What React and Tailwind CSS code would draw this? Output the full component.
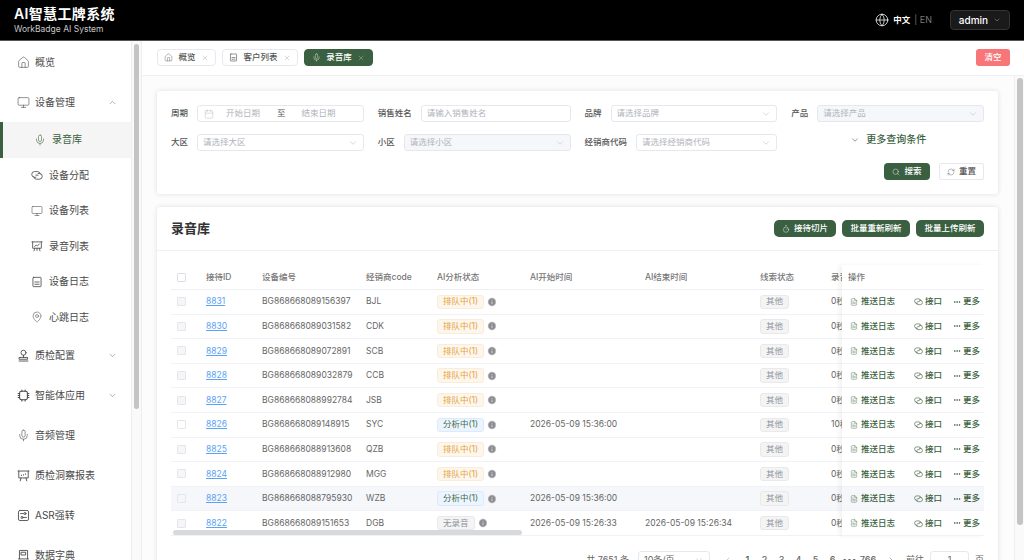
import React from 'react';
import { House, Monitor, Mic, ChevronDown, ChevronUp, ChevronLeft, ChevronRight, X, Calendar, Search, RefreshCw, Timer, Globe, Ellipsis, Info, MapPin, FileText } from 'lucide-react';

const Svg = ({ className, sw = 1.1, children }) => (
  <svg viewBox="0 0 16 16" fill="none" stroke="currentColor" strokeWidth={sw} strokeLinecap="round" strokeLinejoin="round" className={className}>{children}</svg>
);
const Conn = ({ className }) => (
  <Svg className={className}>
    <path d="M6.5 11H4.8a3.8 3.8 0 0 1 0-7.6h3.9a3.8 3.8 0 0 1 3.7 3" />
    <path d="M9.5 6h1.7a3.8 3.8 0 0 1 0 7.6H7.3a3.8 3.8 0 0 1-3.7-3" />
    <path d="M6.5 8.2h3" />
  </Svg>
);
const Board = ({ className }) => (
  <Svg className={className}>
    <path d="M1.2 2.5h13.6" /><path d="M2.2 2.5v8.5h11.6V2.5" />
    <path d="M5 11l-1 3.5M11 11l1 3.5M8 11v3" /><path d="M4.8 8.6l2-1.8 1.8 1 2.6-2.6" />
  </Svg>
);
const BoardDots = ({ className }) => (
  <Svg className={className}>
    <path d="M1.2 2.5h13.6" /><path d="M2.2 2.5v8.5h11.6V2.5" />
    <path d="M5 11l-1 3.5M11 11l1 3.5" /><path d="M5.5 7.5v.6M8 7v.6M10.5 6v.6" />
  </Svg>
);
const Ticket = ({ className }) => (
  <Svg className={className}>
    <rect x="2.6" y="1.8" width="10.8" height="12.4" rx="0.8" /><path d="M5.2 8h5.6M5.2 11h5.6" />
  </Svg>
);
const StampI = ({ className }) => (
  <Svg className={className}>
    <circle cx="8" cy="4.6" r="3.1" /><path d="M8 7.7v2.6" /><path d="M3 10.4h10v2.2H3z" /><path d="M2.6 14.8h10.8" />
  </Svg>
);
const Chip = ({ className }) => (
  <Svg className={className} sw={1.3}>
    <rect x="3.2" y="2.8" width="9.6" height="10.4" rx="2" />
    <path d="M1.4 5.5h1.8M1.4 8h1.8M1.4 10.5h1.8M12.8 5.5h1.8M12.8 8h1.8M12.8 10.5h1.8M6 1.2v1.6M10 1.2v1.6M6 13.2v1.6M10 13.2v1.6" />
  </Svg>
);
const Ops = ({ className }) => (
  <Svg className={className}>
    <rect x="1.8" y="1.8" width="12.4" height="12.4" rx="1.8" />
    <path d="M4.4 5.6h3.4M11.6 10.4H8.2" /><circle cx="9.8" cy="5.6" r="1.3" /><circle cx="6.2" cy="10.4" r="1.3" />
  </Svg>
);
const Book = ({ className }) => (
  <Svg className={className}>
    <path d="M3 12.2V1.8h10v10.4" /><path d="M1.8 12.2h12.4v0M2 14.6h12" /><rect x="5.4" y="4" width="5.2" height="3.4" />
  </Svg>
);

const sub = [
  ['录音库', Mic, true],
  ['设备分配', Conn],
  ['设备列表', Monitor],
  ['录音列表', Board],
  ['设备日志', Ticket],
  ['心跳日志', MapPin],
];
const top2 = [
  ['质检配置', StampI, true],
  ['智能体应用', Chip, true],
  ['音频管理', Mic],
  ['质检洞察报表', BoardDots],
  ['ASR强转', Ops],
  ['数据字典', Book],
];

const rows = [
  ['8831', 'BG868668089156397', 'BJL', 'q', '', '', '0秒'],
  ['8830', 'BG868668089031582', 'CDK', 'q', '', '', '0秒'],
  ['8829', 'BG868668089072891', 'SCB', 'q', '', '', '0秒'],
  ['8828', 'BG868668089032879', 'CCB', 'q', '', '', '0秒'],
  ['8827', 'BG868668088992784', 'JSB', 'q', '', '', '0秒'],
  ['8826', 'BG868668089148915', 'SYC', 'a', '2026-05-09 15:36:00', '', '10秒'],
  ['8825', 'BG868668088913608', 'QZB', 'q', '', '', '0秒'],
  ['8824', 'BG868668088912980', 'MGG', 'q', '', '', '0秒'],
  ['8823', 'BG868668088795930', 'WZB', 'a', '2026-05-09 15:36:00', '', '0秒'],
  ['8822', 'BG868668089151653', 'DGB', 'n', '2026-05-09 15:26:33', '2026-05-09 15:26:34', '0秒'],
];

const tagCls = {
  q: 'bg-[#fdf6ec] border-[#faecd8] text-[#e6a23c]',
  a: 'bg-[#ecf5ff] border-[#d9ecff] text-[#3f6b4a]',
  n: 'bg-[#f4f4f5] border-[#e9e9eb] text-[#909399]',
};
const tagText = { q: '排队中(1)', a: '分析中(1)', n: '无录音' };

const Field = ({ label, children }) => (
  <div className="flex items-center h-[17px]">
    <span className="shrink-0 mr-[9px] text-[#555] font-medium">{label}</span>
    {children}
  </div>
);

const SelectBox = ({ ph, disabled }) => (
  <div className={`flex-1 h-[17px] flex items-center justify-between px-[5px] border border-[#e6e8ee] rounded-[3px] ${disabled ? 'bg-[#f5f7fa]' : 'bg-white'}`}>
    <span className="text-[#b0b3ba]">{ph}</span>
    <ChevronDown className="w-[10px] h-[10px] text-[#b0b3ba]" strokeWidth={1.2} />
  </div>
);

const GreenBtn = ({ children, w }) => (
  <div className={`h-[17px] ${w} flex items-center justify-center gap-[4px] bg-[#3a5f41] text-white text-[8.5px] font-medium rounded-[4px]`}>{children}</div>
);

const Tab = ({ Icon, label, active, w }) => (
  <div className={`h-[17px] ${w} flex items-center justify-center gap-[5px] rounded-[4px] border text-[8.5px] font-medium ${active ? 'bg-[#3a5f41] border-[#3a5f41] text-white' : 'bg-white border-[#e6e8ee] text-[#555]'}`}>
    <Icon className="w-[9px] h-[9px]" strokeWidth={1.1} />
    <span>{label}</span>
    <X className={`w-[8px] h-[8px] ${active ? 'text-[#d0d8d2]' : 'text-[#999]'}`} strokeWidth={1.1} />
  </div>
);

export default function App() {
  return (
    <div className="w-[1024px] h-[560px] overflow-hidden flex flex-col bg-white text-[8.5px] text-[#666] font-['Inter','Noto_Sans_CJK_SC',sans-serif]">
      <header className="h-[41px] shrink-0 bg-black border-b border-[#555] flex items-center pl-[14px] pr-[14px]">
        <div className="flex flex-col">
          <span className="text-white text-[14px] leading-[17px] font-semibold tracking-[0.35px]">AI智慧工牌系统</span>
          <span className="text-[#c8c8c8] text-[8.5px] leading-[11px] mt-[2px]">WorkBadge AI System</span>
        </div>
        <div className="ml-auto flex items-center">
          <Globe className="w-[14px] h-[14px] text-white" strokeWidth={1.3} />
          <span className="ml-[4px] text-white text-[8.5px] font-semibold">中文</span>
          <span className="ml-[4px] text-[#777] text-[9px]">| EN</span>
          <div className="ml-[18px] w-[60px] h-[20px] rounded-[4px] border border-[#333] bg-[#1a1a1a] flex items-center justify-center gap-[5px] text-white text-[10px] font-medium">
            admin <ChevronDown className="w-[8px] h-[8px] text-[#bbb]" strokeWidth={1.3} />
          </div>
        </div>
      </header>

      <div className="flex-1 min-h-0 flex">
        <aside className="w-[142px] shrink-0 flex border-r border-[#eeeeee] overflow-hidden">
          <nav className="w-[131px] shrink-0 text-[10px] text-[#4a4a4a]">
            <div className="h-[42px] flex items-center pl-[17px] gap-[5px]">
              <House className="w-[13px] h-[13px]" strokeWidth={1.1} /><span>概览</span>
            </div>
            <div className="h-[39px] flex items-center pl-[17px] gap-[5px]">
              <Monitor className="w-[13px] h-[13px]" strokeWidth={1.1} /><span>设备管理</span>
              <ChevronUp className="w-[9px] h-[9px] ml-auto mr-[14px]" strokeWidth={1.1} />
            </div>
            {sub.map(([t, I, act]) => (
              <div key={t} className={`h-[35.5px] flex items-center gap-[6px] ${act ? 'pl-[31px] bg-[#f5f5f5] border-l-[3px] border-[#3a5f41] text-[#3a5f41]' : 'pl-[31px]'}`}>
                <I className="w-[12px] h-[12px]" strokeWidth={1.1} /><span>{t}</span>
              </div>
            ))}
            {top2.map(([t, I, chev]) => (
              <div key={t} className="h-[40px] flex items-center pl-[17px] gap-[5px]">
                <I className="w-[13px] h-[13px]" strokeWidth={1.1} /><span>{t}</span>
                {chev && <ChevronDown className="w-[9px] h-[9px] ml-auto mr-[14px]" strokeWidth={1.1} />}
              </div>
            ))}
          </nav>
          <div className="flex-1 border-l border-[#eeeeee] bg-[#fafafa] flex justify-center">
            <div className="w-[5px] h-[365px] mt-[3px] rounded-full bg-[#c4c4c4]" />
          </div>
        </aside>

        <main className="flex-1 min-w-0 flex flex-col">
          <div className="h-[35px] shrink-0 border-b border-[#f0f0f0] flex items-center gap-[6px] pl-[15px] pr-[14px] pb-[1px]">
            <Tab Icon={House} label="概览" w="w-[59px]" />
            <Tab Icon={Ticket} label="客户列表" w="w-[76px]" />
            <Tab Icon={Mic} label="录音库" w="w-[69px]" active />
            <div className="ml-auto w-[34px] h-[17px] rounded-[3px] bg-[#f87578] text-white text-[8.5px] font-medium flex items-center justify-center">清空</div>
          </div>

          <div className="flex-1 min-h-0 flex">
            <div className="flex-1 min-w-0 overflow-hidden pl-[15px] pr-[16px] pt-[15px] flex flex-col gap-[13px] bg-[#fcfcfc]">
              <section className="shrink-0 h-[103px] bg-white rounded-[3px] shadow-[0_0_5px_rgba(0,0,0,0.12)] p-[14px]">
                <div className="grid grid-cols-4 gap-x-[14px] gap-y-[12px]">
                  <Field label="周期">
                    <div className="flex-1 h-[17px] flex items-center border border-[#e6e8ee] rounded-[3px] pl-[6px] text-[#b0b3ba]">
                      <Calendar className="w-[10px] h-[10px]" strokeWidth={1} />
                      <span className="ml-[12px]">开始日期</span>
                      <span className="ml-[17px] text-[#555]">至</span>
                      <span className="ml-[16px]">结束日期</span>
                    </div>
                  </Field>
                  <Field label="销售姓名">
                    <div className="flex-1 h-[17px] flex items-center border border-[#e6e8ee] rounded-[3px] px-[5px] text-[#b0b3ba]">请输入销售姓名</div>
                  </Field>
                  <Field label="品牌"><SelectBox ph="请选择品牌" /></Field>
                  <Field label="产品"><SelectBox ph="请选择产品" disabled /></Field>
                  <Field label="大区"><SelectBox ph="请选择大区" /></Field>
                  <Field label="小区"><SelectBox ph="请选择小区" disabled /></Field>
                  <Field label="经销商代码"><SelectBox ph="请选择经销商代码" /></Field>
                  <div className="h-[17px] flex items-center justify-start pl-[59px] gap-[6px] text-[#3a5f41] text-[10px] font-medium -mt-[3px]">
                    <ChevronDown className="w-[10px] h-[10px]" strokeWidth={1.4} />更多查询条件
                  </div>
                </div>
                <div className="flex justify-end gap-[9px] mt-[12px]">
                  <GreenBtn w="w-[46px]"><Search className="w-[8px] h-[8px]" strokeWidth={1.3} />搜索</GreenBtn>
                  <div className="h-[17px] w-[45px] flex items-center justify-center gap-[4px] bg-white border border-[#e6e8ee] rounded-[2px] text-[#555] text-[8.5px] font-medium">
                    <RefreshCw className="w-[8px] h-[8px]" strokeWidth={1.2} />重置
                  </div>
                </div>
              </section>

              <section className="shrink-0 bg-white rounded-[3px] shadow-[0_0_5px_rgba(0,0,0,0.12)]">
                <div className="h-[44px] border-b border-[#f0f0f0] flex items-center px-[14px]">
                  <h2 className="text-[13px] font-semibold text-[#333]">录音库</h2>
                  <div className="ml-auto flex gap-[6px]">
                    <GreenBtn w="w-[62px] rounded-[5px]"><Timer className="w-[8px] h-[8px]" strokeWidth={1.3} />接待切片</GreenBtn>
                    <GreenBtn w="w-[68px] rounded-[5px]">批量重新刷新</GreenBtn>
                    <GreenBtn w="w-[68px] rounded-[5px]">批量上传刷新</GreenBtn>
                  </div>
                </div>

                <div className="relative mx-[14px] mt-[14px] flex text-[8.5px]">
                  <div className="w-[671px] shrink-0 overflow-hidden">
                    <div className="h-[25px] flex items-center border-b border-[#eef0f4] font-medium text-[#777]">
                      <div className="w-[27px] flex justify-center shrink-0 pr-[6px]"><span className="w-[9px] h-[9px] border border-[#dcdfe6] rounded-[1px] bg-white" /></div>
                      <div className="w-[56px] pl-[8px] shrink-0">接待ID</div>
                      <div className="w-[104px] pl-[8px] shrink-0">设备编号</div>
                      <div className="w-[71px] pl-[8px] shrink-0">经销商code</div>
                      <div className="w-[93px] pl-[8px] shrink-0">AI分析状态</div>
                      <div className="w-[115px] pl-[8px] shrink-0">AI开始时间</div>
                      <div className="w-[115px] pl-[8px] shrink-0">AI结束时间</div>
                      <div className="w-[71px] pl-[8px] shrink-0">线索状态</div>
                      <div className="w-[19px] pl-[8px] shrink-0 overflow-hidden whitespace-nowrap">录音</div>
                    </div>
                    {rows.map((r) => (
                      <div key={r[0]} className={`h-[24.6px] flex items-center border-b border-[#f1f2f5] ${r[0] === '8823' ? 'bg-[#f5f7fa]' : ''}`}>
                        <div className="w-[27px] flex justify-center shrink-0 pr-[6px]"><span className={`w-[9px] h-[9px] border border-[#e4e6eb] rounded-[1px] ${r[0] === '8826' ? 'bg-white' : 'bg-[#f5f6f8]'}`} /></div>
                        <div className="w-[56px] pl-[8px] shrink-0 text-[#5aa3f5] underline">{r[0]}</div>
                        <div className="w-[104px] pl-[8px] shrink-0 whitespace-nowrap">{r[1]}</div>
                        <div className="w-[71px] pl-[8px] shrink-0">{r[2]}</div>
                        <div className="w-[93px] pl-[8px] shrink-0 flex items-center gap-[3px]">
                          <span className={`h-[14.5px] flex items-center px-[5px] rounded-[3px] border ${tagCls[r[3]]}`}>{tagText[r[3]]}</span>
                          <Info className="w-[10px] h-[10px] text-white fill-[#8c8c92]" strokeWidth={1.5} />
                        </div>
                        <div className="w-[115px] pl-[8px] shrink-0 whitespace-nowrap">{r[4]}</div>
                        <div className="w-[115px] pl-[8px] shrink-0 whitespace-nowrap">{r[5]}</div>
                        <div className="w-[71px] pl-[8px] shrink-0">
                          <span className="inline-flex h-[14.5px] items-center px-[5px] rounded-[3px] border border-[#e9e9eb] bg-[#f4f4f5] text-[#909399]">其他</span>
                        </div>
                        <div className="w-[19px] pl-[8px] shrink-0 overflow-hidden whitespace-nowrap">{r[6]}</div>
                      </div>
                    ))}
                  </div>
                  <div className="flex-1 min-w-0 shadow-[-3px_0_4px_rgba(0,0,0,0.05)] bg-white z-10 font-medium text-[#3a5f41]">
                    <div className="h-[25px] flex items-center pl-[6px] border-b border-[#eef0f4] text-[#777]">操作</div>
                    {rows.map((r) => (
                      <div key={r[0]} className={`h-[24.6px] flex items-center pl-[8px] border-b border-[#f1f2f5] ${r[0] === '8823' ? 'bg-[#f5f7fa]' : ''}`}>
                        <FileText className="w-[8px] h-[8px] mr-[3px]" strokeWidth={1.2} />
                        <span className="w-[53px]">推送日志</span>
                        <Conn className="w-[9px] h-[9px] mr-[2px]" />
                        <span className="w-[28px]">接口</span>
                        <Ellipsis className="w-[8px] h-[8px] mr-[2px]" strokeWidth={2.4} />
                        <span>更多</span>
                      </div>
                    ))}
                  </div>
                  <div className="absolute left-[2px] top-[265px] w-[349px] h-[5px] rounded-full bg-[#d8d9dc]" />
                </div>

                <div className="mt-[14px] h-[20px] flex items-center mx-[14px] justify-end text-[9px] text-[#666]">
                  <span>共 7651 条</span>
                  <div className="ml-[9px] w-[72px] h-[17px] flex items-center justify-between px-[5px] border border-[#e6e8ee] rounded-[3px]">
                    10条/页<ChevronDown className="w-[10px] h-[10px] text-[#aaa]" strokeWidth={1.2} />
                  </div>
                  <ChevronLeft className="ml-[14px] w-[8px] h-[8px] text-[#aaa]" />
                  <div className="ml-[7px] flex font-medium">
                    {['1', '2', '3', '4', '5', '6', '•••', '766'].map((p, i) => (
                      <span key={p} className={`text-center ${i === 0 ? 'text-[#3a5f41]' : ''} ${p === '766' ? 'w-[20px]' : 'w-[17px]'}`}>{p}</span>
                    ))}
                  </div>
                  <ChevronRight className="ml-[9px] w-[8px] h-[8px] text-[#888]" />
                  <span className="ml-[11px]">前往</span>
                  <div className="ml-[6px] w-[39px] h-[17px] flex items-center justify-center border border-[#e6e8ee] rounded-[3px]">1</div>
                  <span className="ml-[6px]">页</span>
                </div>
              </section>
            </div>
            <div className="w-[10px] shrink-0 border-l border-[#eeeeee] bg-[#fafafa] flex justify-center">
              <div className="w-[6px] h-[447px] mt-[2px] rounded-full bg-[#c4c4c4]" />
            </div>
          </div>
        </main>
      </div>
    </div>
  );
}
